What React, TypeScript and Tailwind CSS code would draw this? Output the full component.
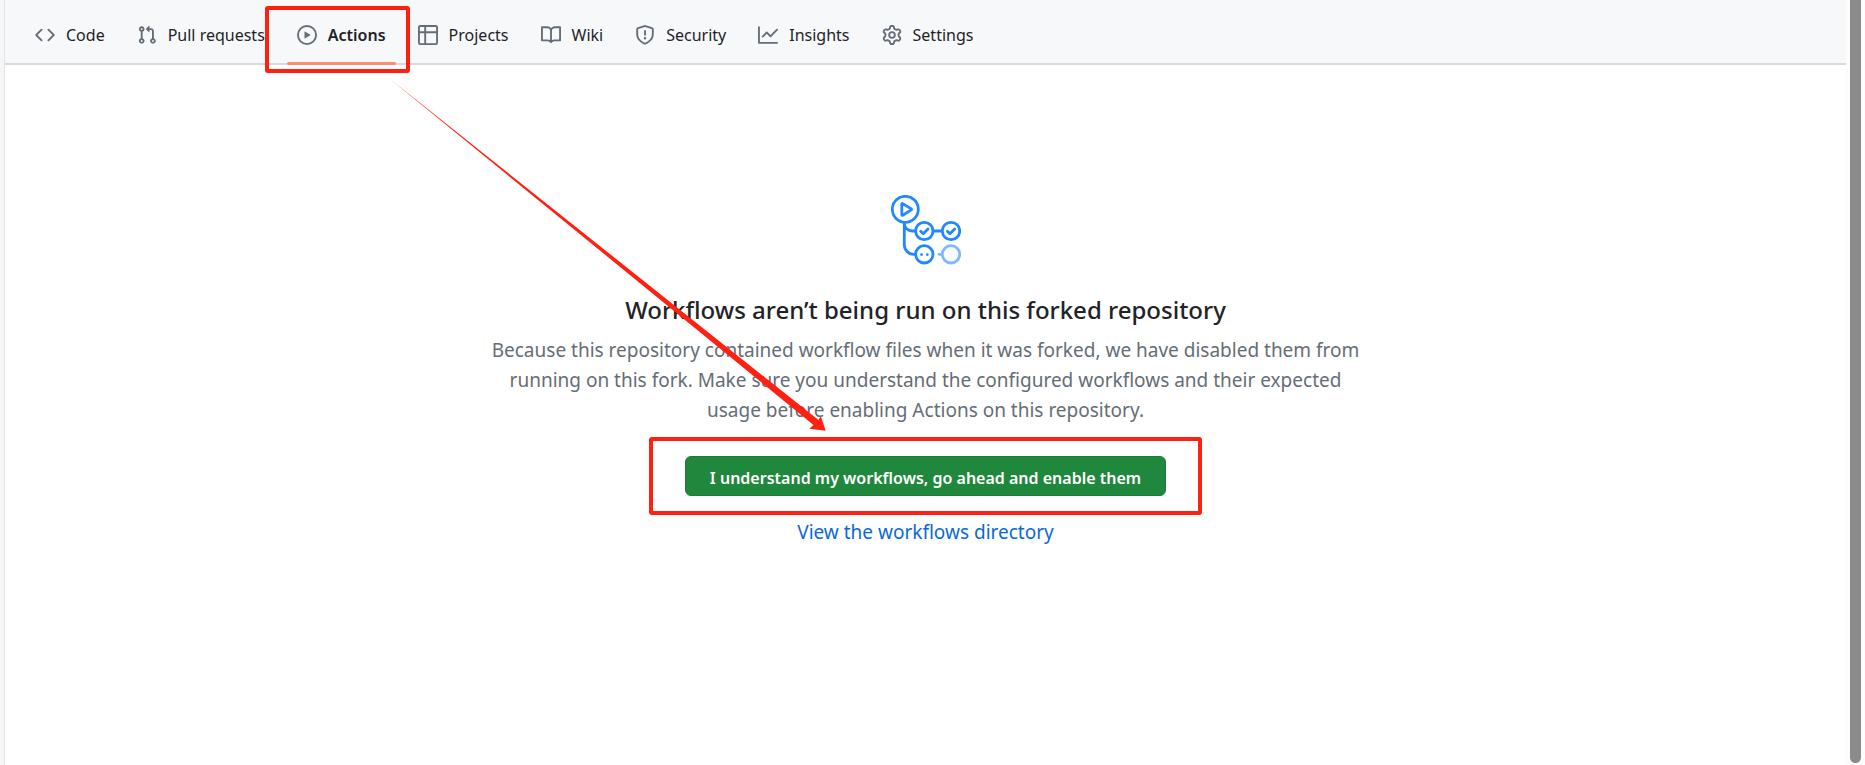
import type { ReactNode } from "react";

type Tab = { label: string; icon: string; current?: boolean };

const TABS: Tab[] = [
  {
    label: "Code",
    icon: "M4.72 3.22a.75.75 0 011.06 1.06L2.06 8l3.72 3.72a.75.75 0 11-1.06 1.06L.47 8.53a.75.75 0 010-1.06l4.25-4.25zm6.56 0a.75.75 0 10-1.06 1.06L13.94 8l-3.72 3.72a.75.75 0 101.06 1.06l4.25-4.25a.75.75 0 000-1.06l-4.25-4.25z",
  },
  {
    label: "Pull requests",
    icon: "M7.177 3.073L9.573.677A.25.25 0 0110 .854v4.792a.25.25 0 01-.427.177L7.177 3.427a.25.25 0 010-.354zM3.75 2.5a.75.75 0 100 1.5.75.75 0 000-1.5zm-2.25.75a2.25 2.25 0 113 2.122v5.256a2.251 2.251 0 11-1.5 0V5.372A2.25 2.25 0 011.5 3.25zM11 2.5h-1V4h1a1 1 0 011 1v5.628a2.251 2.251 0 101.5 0V5A2.5 2.5 0 0011 2.5zm1 10.25a.75.75 0 111.5 0 .75.75 0 01-1.5 0zM3.75 12a.75.75 0 100 1.5.75.75 0 000-1.5z",
  },
  {
    label: "Actions",
    current: true,
    icon: "M1.5 8a6.5 6.5 0 1113 0 6.5 6.5 0 01-13 0zM8 0a8 8 0 100 16A8 8 0 008 0zM6.379 5.227A.25.25 0 006 5.442v5.117a.25.25 0 00.379.214l4.264-2.559a.25.25 0 000-.428L6.379 5.227z",
  },
  {
    label: "Projects",
    icon: "M0 1.75C0 .784.784 0 1.75 0h12.5C15.216 0 16 .784 16 1.75v12.5A1.75 1.75 0 0 1 14.25 16H1.75A1.75 1.75 0 0 1 0 14.25ZM6.5 6.5v8h7.75a.25.25 0 0 0 .25-.25V6.5Zm8-1.5V1.75a.25.25 0 0 0-.25-.25H6.5V5Zm-13 1.5v7.75c0 .138.112.25.25.25H5v-8ZM5 5V1.5H1.75a.25.25 0 0 0-.25.25V5Z",
  },
  {
    label: "Wiki",
    icon: "M0 1.75A.75.75 0 0 1 .75 1h4.253c1.227 0 2.317.59 3 1.501A3.743 3.743 0 0 1 11.006 1h4.245a.75.75 0 0 1 .75.75v10.5a.75.75 0 0 1-.75.75h-4.507a2.25 2.25 0 0 0-1.591.659l-.622.621a.75.75 0 0 1-1.06 0l-.622-.621A2.25 2.25 0 0 0 5.258 13H.75a.75.75 0 0 1-.75-.75Zm7.251 10.324.004-5.073-.002-2.253A2.25 2.25 0 0 0 5.003 2.5H1.5v9h3.757a3.75 3.75 0 0 1 1.994.574ZM8.755 4.75l-.004 7.322a3.752 3.752 0 0 1 1.992-.572H14.5v-9h-3.495a2.25 2.25 0 0 0-2.25 2.25Z",
  },
  {
    label: "Security",
    icon: "M7.467.133a1.748 1.748 0 0 1 1.066 0l5.25 1.68A1.75 1.75 0 0 1 15 3.48V7c0 1.566-.32 3.182-1.303 4.682-.983 1.498-2.585 2.813-5.032 3.855a1.697 1.697 0 0 1-1.33 0c-2.447-1.042-4.049-2.357-5.032-3.855C1.32 10.182 1 8.566 1 7V3.48a1.755 1.755 0 0 1 1.217-1.667Zm.61 1.429a.25.25 0 0 0-.153 0l-5.25 1.68a.25.25 0 0 0-.174.238V7c0 1.358.275 2.666 1.057 3.86.784 1.194 2.121 2.34 4.366 3.297a.196.196 0 0 0 .154 0c2.245-.956 3.582-2.104 4.366-3.298C13.225 9.666 13.5 8.36 13.5 7V3.48a.251.251 0 0 0-.174-.237l-5.25-1.68ZM8.75 4.75v3a.75.75 0 0 1-1.5 0v-3a.75.75 0 0 1 1.5 0ZM9 10.5a1 1 0 1 1-2 0 1 1 0 0 1 2 0Z",
  },
  {
    label: "Insights",
    icon: "M1.5 1.75V13.5h13.75a.75.75 0 0 1 0 1.5H.75a.75.75 0 0 1-.75-.75V1.75a.75.75 0 0 1 1.5 0Zm14.28 2.53-5.25 5.25a.75.75 0 0 1-1.06 0L7 7.06 4.28 9.78a.751.751 0 0 1-1.042-.018.751.751 0 0 1-.018-1.042l3.25-3.25a.75.75 0 0 1 1.06 0L10 7.94l4.72-4.72a.751.751 0 0 1 1.042.018.751.751 0 0 1 .018 1.042Z",
  },
  {
    label: "Settings",
    icon: "M8 0a8.2 8.2 0 0 1 .701.031C9.444.095 9.99.645 10.16 1.29l.288 1.107c.018.066.079.158.212.224.231.114.454.243.668.386.123.082.233.09.299.071l1.103-.303c.644-.176 1.392.021 1.82.63.27.385.506.792.704 1.218.315.675.111 1.422-.364 1.891l-.814.806c-.049.048-.098.147-.088.294.016.257.016.515 0 .772-.01.147.038.246.088.294l.814.806c.475.469.679 1.216.364 1.891a7.977 7.977 0 0 1-.704 1.217c-.428.61-1.176.807-1.82.63l-1.102-.302c-.067-.019-.177-.011-.3.071a5.909 5.909 0 0 1-.668.386c-.133.066-.194.158-.211.224l-.29 1.106c-.168.646-.715 1.196-1.458 1.26a8.006 8.006 0 0 1-1.402 0c-.743-.064-1.289-.614-1.458-1.26l-.289-1.106c-.018-.066-.079-.158-.212-.224a5.738 5.738 0 0 1-.668-.386c-.123-.082-.233-.09-.299-.071l-1.103.303c-.644.176-1.392-.021-1.82-.63a8.12 8.12 0 0 1-.704-1.218c-.315-.675-.111-1.422.363-1.891l.815-.806c.05-.048.098-.147.088-.294a6.214 6.214 0 0 1 0-.772c.01-.147-.038-.246-.088-.294l-.815-.806C.635 6.045.431 5.298.746 4.623a7.92 7.92 0 0 1 .704-1.217c.428-.61 1.176-.807 1.82-.63l1.102.302c.067.019.177.011.3-.071.214-.143.437-.272.668-.386.133-.066.194-.158.211-.224l.29-1.106C6.009.645 6.556.095 7.299.03 7.53.01 7.764 0 8 0Zm-.571 1.525c-.036.003-.108.036-.137.146l-.289 1.105c-.147.561-.549.967-.998 1.189-.173.086-.34.183-.5.29-.417.278-.97.423-1.529.27l-1.103-.303c-.109-.03-.175.016-.195.045-.22.312-.412.644-.573.99-.014.031-.021.11.059.19l.815.806c.411.406.562.957.53 1.456a4.709 4.709 0 0 0 0 .582c.032.499-.119 1.05-.53 1.456l-.815.806c-.081.08-.073.159-.059.19.162.346.353.677.573.989.02.03.085.076.195.046l1.102-.303c.56-.153 1.113-.008 1.53.27.161.107.328.204.501.29.447.222.85.629.997 1.189l.289 1.105c.029.109.101.143.137.146a6.6 6.6 0 0 0 1.142 0c.036-.003.108-.036.137-.146l.289-1.105c.147-.561.549-.967.998-1.189.173-.086.34-.183.5-.29.417-.278.97-.423 1.529-.27l1.103.303c.109.029.175-.016.195-.045.22-.313.411-.644.573-.99.014-.031.021-.11-.059-.19l-.815-.806c-.411-.406-.562-.957-.53-1.456a4.709 4.709 0 0 0 0-.582c-.032-.499.119-1.05.53-1.456l.815-.806c.081-.08.073-.159.059-.19a6.464 6.464 0 0 0-.573-.989c-.02-.03-.085-.076-.195-.046l-1.102.303c-.56.153-1.113.008-1.53-.27a4.44 4.44 0 0 0-.501-.29c-.447-.222-.85-.629-.997-1.189l-.289-1.105c-.029-.11-.101-.143-.137-.146a6.6 6.6 0 0 0-1.142 0ZM11 8a3 3 0 1 1-6 0 3 3 0 0 1 6 0ZM9.5 8a1.5 1.5 0 1 0-3.001.001A1.5 1.5 0 0 0 9.5 8Z",
  },
];

function Highlight({ className }: { className: string }) {
  return (
    <span
      aria-hidden="true"
      className={`pointer-events-none absolute z-10 rounded-[3px] border-4 border-[#ff2012] ${className}`}
    />
  );
}

function TabLink({ tab, children }: { tab: Tab; children?: ReactNode }) {
  return (
    <a
      href={`#${tab.label.toLowerCase().replace(" ", "-")}`}
      aria-current={tab.current ? "page" : undefined}
      className={`relative flex h-full items-center gap-[11px] pt-[6px] ${tab.current ? "font-semibold" : ""}`}
    >
      <svg viewBox="0 0 16 16" aria-hidden="true" className="size-5 shrink-0 fill-[#656d76]">
        <path fillRule="evenodd" d={tab.icon} />
      </svg>
      <span className="whitespace-nowrap">{tab.label}</span>
      {children}
    </a>
  );
}

function WorkflowArt() {
  return (
    <svg
      viewBox="0 0 70 70"
      aria-hidden="true"
      className="size-[70px] fill-none stroke-[#2188ff]"
      strokeWidth="2.8"
      strokeLinecap="round"
      strokeLinejoin="round"
    >
      <circle cx="14.3" cy="14.3" r="13" />
      <path d="M10.8 9.1v10.6a.6.6 0 0 0 .9.5l8.6-5.3a.6.6 0 0 0 0-1L11.7 8.6a.6.6 0 0 0-.9.5z" />
      <path d="M13.3 28v21.8a9.5 9.5 0 0 0 9.5 9.5h1.5M13.3 28c0 4.8 3.6 8 8 8h3M43 36h7.500" />
      <circle cx="33.3" cy="36" r="8.7" />
      <circle cx="60" cy="36" r="8.7" />
      <circle cx="33.3" cy="59.3" r="8.7" />
      <path d="M29.7 36.200l2.5 2.5 4.8-4.8M56.400 36.200l2.5 2.5 4.8-4.8" />
      <g className="stroke-[#7fb8ff]">
        <circle cx="60" cy="59.3" r="8.7" />
        <path d="M48 59.3h2.500" />
      </g>
      <g className="fill-[#2188ff]" stroke="none">
        <circle cx="30.5" cy="59.6" r="1.4" />
        <circle cx="36.3" cy="59.6" r="1.4" />
      </g>
    </svg>
  );
}

export default function App() {
  return (
    <div className="relative flex min-h-screen bg-white font-['Noto_Sans','Open_Sans',sans-serif] text-[#1f2328]">
      <div className="w-[5px] shrink-0 border-r border-[#e4e4e4] bg-[#f6f6f6]" />

      <div className="flex min-w-0 flex-1 flex-col">
        <nav aria-label="Repository" className="h-[65px] border-b-2 border-[#d5dbe1] bg-[#f6f8fa]">
          <ul className="flex h-full gap-8 px-[30px] text-base">
            {TABS.map((tab) => (
              <li key={tab.label} className="h-full">
                <TabLink tab={tab}>
                  {tab.current && (
                    <>
                      <span className="absolute -inset-x-[10px] -bottom-[2px] h-[3px] rounded-full bg-[#fd8c73]" />
                      <Highlight className="top-[6px] -right-6 -bottom-[10px] -left-8" />
                    </>
                  )}
                </TabLink>
              </li>
            ))}
          </ul>
        </nav>

        <main className="flex flex-col items-center px-8 pt-[130px] text-center">
          <WorkflowArt />
          <h1 className="mt-[27px] text-2xl leading-9 font-medium">
            Workflows aren’t being run on this forked repository
          </h1>
          <p className="mt-[7px] max-w-[880px] text-[19px] leading-[30px] text-[#656d76]">
            Because this repository contained workflow files when it was forked, we have disabled them from running on
            this fork. Make sure you understand the configured workflows and their expected usage before enabling
            Actions on this repository.
          </p>
          <div className="relative mt-[31px]">
            <button
              type="button"
              className="h-10 rounded-md border border-[#1f793a] bg-[#1f883d] px-6 pt-[3px] text-base font-semibold text-white"
            >
              I understand my workflows, go ahead and enable them
            </button>
            <Highlight className="-inset-x-9 -inset-y-[19px]" />
          </div>
          <a href="#workflows" className="mt-[21px] text-[19px] leading-[30px] text-[#0969da]">
            View the workflows directory
          </a>
        </main>
      </div>

      <div className="flex w-[19px] shrink-0 bg-[#fcfcfc] pb-[2px] pl-1">
        <div className="w-[11px] rounded-b-full bg-[#8b8b8b]" />
      </div>

      <svg
        viewBox="0 0 436 352"
        aria-hidden="true"
        className="pointer-events-none absolute top-[79px] left-[390px] h-[352px] w-[436px] fill-[#ff2012]"
      >
        <path d="M0 0L428.500 341L430.700 337L435.700 351.700L419.300 349.700L423.500 346L0 0z" />
      </svg>
    </div>
  );
}
